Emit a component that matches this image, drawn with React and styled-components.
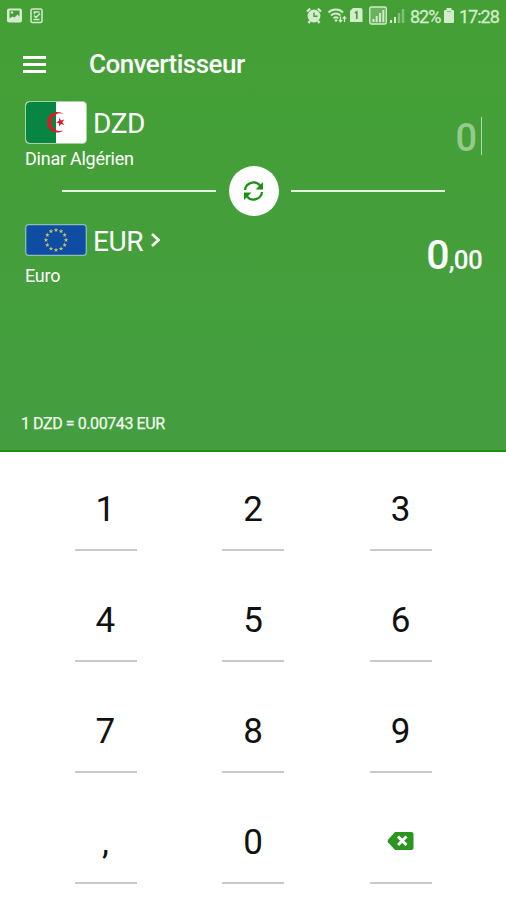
import React, { Component } from 'react'
import styled, { createGlobalStyle } from 'styled-components'

const Theme = {
  green: '#44a035',
  darkGreen: '#1f8f14',
  status: '#d3eccd',
  line: '#c9c9c9',
  text: '#111'
}

const GlobalStyle = createGlobalStyle`
  * {
    box-sizing: border-box;
  }

  body {
    margin: 0;
    background: white;
    font-family: Roboto, sans-serif;
  }
`

const Screen = styled.div`
  width: 506px;
  height: 900px;
  overflow: hidden;
  background: white;
`

const Header = styled.header`
  height: 452px;
  display: flex;
  flex-direction: column;
  color: white;
  background: linear-gradient(${Theme.green}, #449e40);
  border-bottom: 2px solid ${Theme.darkGreen};
`

const StatusBar = styled.div`
  height: 32px;
  padding: 0 7px 0 6px;
  display: flex;
  align-items: center;
  justify-content: space-between;
  color: ${Theme.status};
`

const StatusText = styled.span`
  width: ${props => props.$width}px;
  padding-top: 1px;
  font-size: 18px;
  line-height: 32px;
  letter-spacing: -1px;
  white-space: nowrap;
  -webkit-text-stroke: 0.3px ${Theme.status};
`

const Toolbar = styled.div`
  height: 64px;
  padding-left: 23px;
  display: flex;
  align-items: center;
`

const MenuButton = styled.button`
  width: 24px;
  height: 17px;
  margin: 1px 42px 0 0;
  padding: 0;
  display: flex;
  flex-direction: column;
  justify-content: space-between;
  border: 0;
  background: none;
`

const MenuBar = styled.span`
  height: 3px;
  width: 23px;
  background: white;
`

const Title = styled.h1`
  margin: 0;
  font-size: 26px;
  font-weight: 500;
  line-height: 32px;
  letter-spacing: -0.52px;
`

const CurrencyRow = styled.section`
  height: ${props => props.$height}px;
  padding: 5px 24px 0 25px;
  display: flex;
  justify-content: space-between;
`

const CurrencyName = styled.div`
  display: flex;
  align-items: center;
  height: ${props => props.$height}px;
`

const Code = styled.span`
  margin: 3px 6px 0 6px;
  font-size: 28px;
  line-height: 32px;
  letter-spacing: -0.4px;
`

const Label = styled.div`
  margin-top: ${props => props.$gap}px;
  font-size: 18px;
  line-height: 22px;
  letter-spacing: -0.25px;
`

const Placeholder = styled.div`
  height: 38px;
  margin-top: 16px;
  padding-right: 4px;
  border-right: 1px solid #b4dbab;
  color: #94ca8b;
  font-size: 38px;
  font-weight: 500;
  line-height: 42px;
`

const Amount = styled.div`
  margin: 9px 0 0;
  font-size: 41px;
  font-weight: 500;
  line-height: 50px;
  letter-spacing: -0.9px;
`

const Cents = styled.span`
  font-size: 26px;
  letter-spacing: -0.7px;
`

const Divider = styled.div`
  height: 50px;
  padding: 0 61px 0 62px;
  display: flex;
  align-items: center;
  justify-content: space-between;
`

const Rule = styled.span`
  width: 154px;
  height: 2px;
  background: #e5f5e1;
`

const SwapButton = styled.button`
  width: 50px;
  height: 50px;
  padding: 0;
  display: flex;
  align-items: center;
  justify-content: center;
  border: 0;
  border-radius: 50%;
  background: white;
  color: ${Theme.darkGreen};
`

const Rate = styled.div`
  margin: auto 0 16px 21px;
  font-size: 16px;
  line-height: 20px;
  letter-spacing: -0.42px;
  color: #f0faee;
  -webkit-text-stroke: 0.25px #f0faee;
`

const Keypad = styled.main`
  padding: 1px 31px 0 32px;
  display: grid;
  grid-template-columns: repeat(3, 1fr);
  grid-auto-rows: 98px;
  row-gap: 13px;
`

const Key = styled.button`
  width: 62px;
  margin: 0 auto;
  padding: 18px 1px 0 0;
  display: flex;
  align-items: center;
  justify-content: center;
  border: 0;
  border-bottom: 2px solid ${Theme.line};
  background: none;
  color: ${Theme.text};
  font-family: inherit;
  font-size: 35px;
  line-height: 40px;
`

const keys = ['1', '2', '3', '4', '5', '6', '7', '8', '9', ',', '0']

const euroStars = Array.from({ length: 12 }, (_, i) => {
  const angle = (i * Math.PI) / 6
  return [31 + 10 * Math.sin(angle), 16 - 10 * Math.cos(angle)]
})

const starPoints = (cx, cy, r, turn = 0) =>
  Array.from({ length: 10 }, (_, i) => {
    const radius = i % 2 ? r * 0.4 : r
    const angle = (i * Math.PI) / 5 + turn
    return `${cx + radius * Math.sin(angle)},${cy - radius * Math.cos(angle)}`
  }).join(' ')

const AlgerianFlag = () => (
  <svg width='62' height='43' viewBox='0 0 62 43'>
    <rect x='0.5' y='0.5' width='61' height='42' rx='4' fill='white' />
    <path d='M31 1H5a4 4 0 0 0-4 4v33a4 4 0 0 0 4 4h26z' fill='#098543' />
    <path
      d='M38.8 13.1A10.3 10.3 0 1 0 38.8 29.3A8.9 8.9 0 1 1 38.8 13.1z'
      fill='#df1827'
    />
    <polygon points={starPoints(35.5, 21.2, 4.6, -Math.PI / 2)} fill='#df1827' />
    <rect
      x='0.5'
      y='0.5'
      width='61'
      height='42'
      rx='4'
      fill='none'
      stroke='#a5d49d'
    />
  </svg>
)

const EuropeanFlag = () => (
  <svg width='62' height='32' viewBox='0 0 62 32'>
    <rect
      x='0.7'
      y='0.7'
      width='60.6'
      height='30.6'
      rx='3'
      fill='#0f4da3'
      stroke='#8abfb8'
      strokeWidth='1.3'
    />
    {euroStars.map(([x, y], i) => (
      <polygon key={i} points={starPoints(x, y, 2.4)} fill='#c5c66e' />
    ))}
  </svg>
)

const NotificationIcons = () => (
  <svg width='40' height='20' viewBox='0 0 40 20' fill='none'>
    <rect x='1' y='2.5' width='15' height='14' rx='2' fill={Theme.status} />
    <path d='M3.5 4.5h10v6l-2-2-3 3-2-1-3 2z' fill='#4a9a3b' />
    <circle cx='6' cy='6.5' r='1.2' fill={Theme.status} />
    <rect
      x='25'
      y='3'
      width='11'
      height='13.5'
      rx='1.5'
      stroke={Theme.status}
      strokeWidth='1.5'
    />
    <path
      d='M27.5 6h6M27.5 13.5h6M28 9.5l2 2 4-4M28 7l1 1'
      stroke={Theme.status}
      strokeWidth='1.5'
    />
  </svg>
)

const SystemIcons = () => (
  <svg width='100' height='24' viewBox='306 4 100 24' fill='none'>
    <circle cx='314' cy='16' r='6.4' fill={Theme.status} />
    <path
      d='M307 11.5l3.2-2.8M321 11.5l-3.2-2.8M310 21l-1.5 2M318 21l1.5 2'
      stroke={Theme.status}
      strokeWidth='2.2'
    />
    <path d='M314 12.5V16.3h3.5' stroke={Theme.green} strokeWidth='1.4' />
    <path
      d='M328.5 12.5c4-4 10.5-4 14.5 0M331 15.5c2.7-2.7 7-2.7 9.5 0M333.5 18.3c1.4-1.3 3.4-1.3 4.7 0'
      stroke={Theme.status}
      strokeWidth='1.9'
    />
    <circle cx='336' cy='20.5' r='1.3' fill={Theme.status} />
    <path
      d='M340.5 16.5v5M338.8 19.8l1.7 2 1.7-2M344.5 22v-5M342.8 18.7l1.7-2 1.7 2'
      stroke={Theme.status}
      strokeWidth='1.3'
    />
    <path d='M353 8h7.5a2 2 0 0 1 2 2v12h-12.5v-11z' fill={Theme.status} />
    <path d='M354.8 13l2-1v7' stroke={Theme.green} strokeWidth='1.7' />
    <rect
      x='369.8'
      y='7'
      width='16.5'
      height='17'
      rx='1.5'
      fill='#68b35b'
      stroke={Theme.status}
      strokeWidth='1.3'
    />
    <path
      d='M373.5 22v-3M376.7 22v-6M380 22v-9M383.3 22V10'
      stroke={Theme.status}
      strokeWidth='1.9'
    />
    <path d='M391 23v-3M395 23v-6' stroke={Theme.status} strokeWidth='2' />
    <path d='M399 23V13M403 23V9' stroke='#83c078' strokeWidth='2.4' />
  </svg>
)

const BatteryIcon = () => (
  <svg width='12' height='18' viewBox='0 0 12 18' fill={Theme.status}>
    <path d='M3.5 1h5v2H10a1 1 0 0 1 1 1v11a1 1 0 0 1-1 1H2a1 1 0 0 1-1-1V4a1 1 0 0 1 1-1h1.5z' />
    <path d='M4 4.5h4' stroke='#8bc480' strokeWidth='1' />
  </svg>
)

const StatusGroup = styled.div`
  display: flex;
  align-items: center;
  gap: 4px;
`

const SwapIcon = () => (
  <svg width='22' height='24' viewBox='0 0 22 24' fill='none'>
    <path
      d='M2 11A8.5 8.5 0 0 1 17 6.500M19 13A8.5 8.5 0 0 1 4 17.5'
      stroke='currentColor'
      strokeWidth='2.3'
    />
    <path d='M20 3v7.5h-7.5zM1 21v-7.5h7.5z' fill='currentColor' />
  </svg>
)

const Chevron = () => (
  <svg width='13' height='16' viewBox='0 0 13 16' fill='none'>
    <path d='M3 2l6.5 6L3 14' stroke='white' strokeWidth='2.6' />
  </svg>
)

const DeleteIcon = () => (
  <svg width='27' height='24' viewBox='0 0 27 24' fill='none'>
    <path
      d='M8 1h16.5a2 2 0 0 1 2 2v14a2 2 0 0 1-2 2H8L1 11.2a2 2 0 0 1 0-2.400z'
      fill='#2b9520'
    />
    <path
      d='M11 5.500l8.5 8.5M19.5 5.500L11 14'
      stroke='white'
      strokeWidth='3'
    />
  </svg>
)

class App extends Component {
  render () {
    return (
      <Screen>
        <GlobalStyle />
        <Header>
          <StatusBar>
            <NotificationIcons />
            <StatusGroup>
              <SystemIcons />
              <StatusText $width={29}>82%</StatusText>
              <BatteryIcon />
              <StatusText $width={40}>17:28</StatusText>
            </StatusGroup>
          </StatusBar>
          <Toolbar>
            <MenuButton aria-label='Menu'>
              <MenuBar />
              <MenuBar />
              <MenuBar />
            </MenuButton>
            <Title>Convertisseur</Title>
          </Toolbar>
          <CurrencyRow $height={70}>
            <div>
              <CurrencyName $height={43}>
                <AlgerianFlag />
                <Code>DZD</Code>
              </CurrencyName>
              <Label $gap={4}>Dinar Algérien</Label>
            </div>
            <Placeholder>0</Placeholder>
          </CurrencyRow>
          <Divider>
            <Rule />
            <SwapButton aria-label='Inverser'>
              <SwapIcon />
            </SwapButton>
            <Rule />
          </Divider>
          <CurrencyRow $height={80}>
            <div>
              <CurrencyName $height={38}>
                <EuropeanFlag />
                <Code>EUR</Code>
                <Chevron />
              </CurrencyName>
              <Label $gap={6}>Euro</Label>
            </div>
            <Amount>
              0<Cents>,00</Cents>
            </Amount>
          </CurrencyRow>
          <Rate>1 DZD = 0.00743 EUR</Rate>
        </Header>
        <Keypad>
          {keys.map(key => (
            <Key key={key}>{key}</Key>
          ))}
          <Key aria-label='Effacer'>
            <DeleteIcon />
          </Key>
        </Keypad>
      </Screen>
    )
  }
}

export default App
